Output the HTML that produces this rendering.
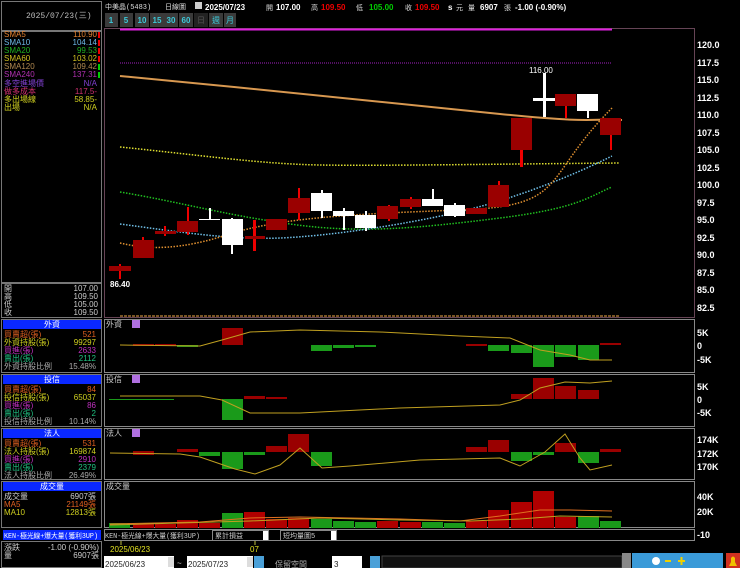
<!DOCTYPE html>
<html><head><meta charset="utf-8"><style>
html,body{margin:0;padding:0;background:#000;width:740px;height:568px;overflow:hidden}
svg{display:block}
text{font-family:"Liberation Sans","Noto Sans CJK TC",sans-serif;font-size:8px}
.m{font-family:"Liberation Mono","Noto Sans CJK TC",monospace;font-size:8px}
.s{font-size:7px}
.ax{font-family:"Liberation Sans",sans-serif;font-size:9px;fill:#fff;font-weight:bold}
</style></head><body>
<svg width="740" height="568" viewBox="0 0 740 568" xmlns="http://www.w3.org/2000/svg">
<rect width="740" height="568" fill="#000"/>
<g fill="none" stroke="#777" stroke-width="1">
<rect x="1.5" y="1.5" width="100" height="29"/>
<rect x="1.5" y="31.5" width="100" height="251"/>
<rect x="1.5" y="283.5" width="100" height="34"/>
<rect x="1.5" y="319.5" width="100" height="53"/>
<rect x="1.5" y="374.5" width="100" height="52"/>
<rect x="1.5" y="428.5" width="100" height="51"/>
<rect x="1.5" y="481.5" width="100" height="46"/>
<rect x="1.5" y="541.5" width="100" height="26"/>
</g>
<text x="26" y="18" class="m" fill="#bbb">2025/07/23(三)</text>
<g class="m s">
<text x="4" y="37" fill="#e08030">SMA5</text><text x="97" y="37" fill="#e08030" text-anchor="end">110.90</text>
<text x="4" y="45" fill="#6cb8e8">SMA10</text><text x="97" y="45" fill="#6cb8e8" text-anchor="end">104.14</text>
<text x="4" y="53" fill="#20b020">SMA20</text><text x="97" y="53" fill="#20b020" text-anchor="end">99.53</text>
<text x="4" y="61" fill="#d0c020">SMA60</text><text x="97" y="61" fill="#d0c020" text-anchor="end">103.02</text>
<text x="4" y="69" fill="#b08850">SMA120</text><text x="97" y="69" fill="#b08850" text-anchor="end">109.42</text>
<text x="4" y="77" fill="#b030b0">SMA240</text><text x="97" y="77" fill="#b030b0" text-anchor="end">137.31</text>
<text x="4" y="86" fill="#8040d0">多空進場價</text><text x="97" y="86" fill="#8040d0" text-anchor="end">N/A</text>
<text x="4" y="94" fill="#d03070">做多成本</text><text x="97" y="94" fill="#d03070" text-anchor="end">117.5-</text>
<text x="4" y="102" fill="#d0d020">多出場線</text><text x="97" y="102" fill="#d0d020" text-anchor="end">58.85-</text>
<text x="4" y="110" fill="#d0d020">出場</text><text x="97" y="110" fill="#d0d020" text-anchor="end">N/A</text>
</g>
<g fill="#e00"><rect x="98" y="32" width="2" height="6"/><rect x="98" y="40" width="2" height="6"/><rect x="98" y="48" width="2" height="6"/><rect x="98" y="56" width="2" height="6"/></g>
<g fill="#0c0"><rect x="98" y="64" width="2" height="6"/><rect x="98" y="72" width="2" height="6"/></g>
<g class="m s" fill="#ccc">
<text x="4" y="291">開</text><text x="98" y="291" text-anchor="end">107.00</text>
<text x="4" y="299">高</text><text x="98" y="299" text-anchor="end">109.50</text>
<text x="4" y="307">低</text><text x="98" y="307" text-anchor="end">105.00</text>
<text x="4" y="315">收</text><text x="98" y="315" text-anchor="end">109.50</text>
</g>
<g fill="#0a28ff"><rect x="3" y="320" width="98" height="9"/><rect x="3" y="375" width="98" height="9"/><rect x="3" y="429" width="98" height="9"/><rect x="3" y="482" width="98" height="9"/><rect x="3" y="530" width="98" height="10"/></g>
<g class="m s" fill="#fff" text-anchor="middle"><text x="52" y="327">外資</text><text x="52" y="382">投信</text><text x="52" y="436">法人</text><text x="52" y="489">成交量</text></g>
<text x="4" y="538" class="m s" fill="#fff" textLength="94" lengthAdjust="spacingAndGlyphs">KEN-極光線+爆大量(獲利3UP)</text>
<g class="m s">
<text x="4" y="337" fill="#e06020">買賣超(張)</text><text x="96" y="337" fill="#e06020" text-anchor="end">521</text>
<text x="4" y="345" fill="#d0d020">外資持股(張)</text><text x="96" y="345" fill="#d0d020" text-anchor="end">99297</text>
<text x="4" y="353" fill="#c030c0">買進(張)</text><text x="96" y="353" fill="#c030c0" text-anchor="end">2633</text>
<text x="4" y="361" fill="#20c080">賣出(張)</text><text x="96" y="361" fill="#20c080" text-anchor="end">2112</text>
<text x="4" y="369" fill="#aaa">外資持股比例</text><text x="96" y="369" fill="#aaa" text-anchor="end">15.48%</text>
<text x="4" y="392" fill="#e06020">買賣超(張)</text><text x="96" y="392" fill="#e06020" text-anchor="end">84</text>
<text x="4" y="400" fill="#d0d020">投信持股(張)</text><text x="96" y="400" fill="#d0d020" text-anchor="end">65037</text>
<text x="4" y="408" fill="#c030c0">買進(張)</text><text x="96" y="408" fill="#c030c0" text-anchor="end">86</text>
<text x="4" y="416" fill="#20c080">賣出(張)</text><text x="96" y="416" fill="#20c080" text-anchor="end">2</text>
<text x="4" y="424" fill="#aaa">投信持股比例</text><text x="96" y="424" fill="#aaa" text-anchor="end">10.14%</text>
<text x="4" y="446" fill="#e06020">買賣超(張)</text><text x="96" y="446" fill="#e06020" text-anchor="end">531</text>
<text x="4" y="454" fill="#d0d020">法人持股(張)</text><text x="96" y="454" fill="#d0d020" text-anchor="end">169874</text>
<text x="4" y="462" fill="#c030c0">買進(張)</text><text x="96" y="462" fill="#c030c0" text-anchor="end">2910</text>
<text x="4" y="470" fill="#20c080">賣出(張)</text><text x="96" y="470" fill="#20c080" text-anchor="end">2379</text>
<text x="4" y="478" fill="#aaa">法人持股比例</text><text x="96" y="478" fill="#aaa" text-anchor="end">26.49%</text>
<text x="4" y="499" fill="#ccc">成交量</text><text x="96" y="499" fill="#ccc" text-anchor="end">6907張</text>
<text x="4" y="507" fill="#e06020">MA5</text><text x="96" y="507" fill="#e06020" text-anchor="end">21149張</text>
<text x="4" y="515" fill="#d0d020">MA10</text><text x="96" y="515" fill="#d0d020" text-anchor="end">12813張</text>
<text x="4" y="550" fill="#ccc">漲跌</text><text x="99" y="550" fill="#ccc" text-anchor="end">-1.00 (-0.90%)</text>
<text x="4" y="558" fill="#ccc">量</text><text x="99" y="558" fill="#ccc" text-anchor="end">6907張</text>
</g>
<text x="105" y="9" class="m s" fill="#ddd">中美晶(5483)</text>
<text x="165" y="9" class="m s" fill="#ddd">日線圖</text>
<rect x="195" y="2" width="7" height="7" fill="#ccc"/>
<text x="205" y="10" font-size="9" fill="#fff" font-weight="bold">2025/07/23</text>
<text x="266" y="10" class="m s" fill="#ddd">開</text><text x="276" y="10" font-size="9" fill="#fff" font-weight="bold">107.00</text>
<text x="311" y="10" class="m s" fill="#ddd">高</text><text x="321" y="10" font-size="9" fill="#e00" font-weight="bold">109.50</text>
<text x="356" y="10" class="m s" fill="#ddd">低</text><text x="369" y="10" font-size="9" fill="#0c0" font-weight="bold">105.00</text>
<text x="405" y="10" class="m s" fill="#ddd">收</text><text x="415" y="10" font-size="9" fill="#e00" font-weight="bold">109.50</text>
<text x="448" y="10" font-size="9" fill="#fff" font-weight="bold">s</text><text x="456" y="10" class="m s" fill="#ddd">元</text>
<text x="468" y="10" class="m s" fill="#ddd">量</text><text x="480" y="10" font-size="9" fill="#fff" font-weight="bold">6907</text>
<text x="504" y="10" class="m s" fill="#ddd">張</text><text x="515" y="10" font-size="9" fill="#fff" font-weight="bold">-1.00 (-0.90%)</text>
<g fill="#3a3a3a"><rect x="105" y="13" width="13" height="14"/><rect x="120" y="13" width="13" height="14"/><rect x="135" y="13" width="14" height="14"/><rect x="150" y="13" width="14" height="14"/><rect x="164" y="13" width="14" height="14"/><rect x="179" y="13" width="14" height="14"/><rect x="194" y="13" width="14" height="14" fill="#222"/><rect x="209" y="13" width="14" height="14"/><rect x="224" y="13" width="12" height="14"/></g>
<g fill="#3cc8d8" text-anchor="middle"><text x="111" y="23" font-size="9" font-weight="bold">1</text><text x="126" y="23" font-size="9" font-weight="bold">5</text><text x="142" y="23" font-size="9" font-weight="bold">10</text><text x="157" y="23" font-size="9" font-weight="bold">15</text><text x="171" y="23" font-size="9" font-weight="bold">30</text><text x="186" y="23" font-size="9" font-weight="bold">60</text></g>
<g class="m s" text-anchor="middle"><text x="201" y="23" fill="#555">日</text><text x="216" y="23" fill="#3cc8d8">週</text><text x="230" y="23" fill="#3cc8d8">月</text></g>
<rect x="104.5" y="28.5" width="590" height="289" fill="none" stroke="#664455"/>
<line x1="120" y1="29.5" x2="612" y2="29.5" stroke="#e020e0" stroke-width="2"/>
<line x1="120" y1="63" x2="612" y2="63" stroke="#a020c0" stroke-dasharray="1,1"/>
<g><text x="697" y="48" class="ax">120.0</text><text x="697" y="66" class="ax">117.5</text><text x="697" y="83" class="ax">115.0</text><text x="697" y="101" class="ax">112.5</text><text x="697" y="118" class="ax">110.0</text><text x="697" y="136" class="ax">107.5</text><text x="697" y="153" class="ax">105.0</text><text x="697" y="171" class="ax">102.5</text><text x="697" y="188" class="ax">100.0</text><text x="697" y="206" class="ax">97.5</text><text x="697" y="223" class="ax">95.0</text><text x="697" y="241" class="ax">92.5</text><text x="697" y="258" class="ax">90.0</text><text x="697" y="276" class="ax">87.5</text><text x="697" y="293" class="ax">85.0</text><text x="697" y="311" class="ax">82.5</text></g>
<path d="M120 76 C250 88 400 104 500 114 S590 118 622 120" stroke="#d89850" stroke-width="2" fill="none"/>
<path d="M120 147 C200 155 260 164 320 165 S500 164 620 163" stroke="#e0e030" stroke-width="1.5" stroke-dasharray="1.5,1.5" fill="none"/>
<path d="M120 192 C180 202 220 214 290 224 S420 228 500 218 S590 196 612 187" stroke="#20c020" stroke-width="1.5" stroke-dasharray="1.5,1.5" fill="none"/>
<path d="M120 224 C180 232 230 240 280 238 S400 225 450 214 S560 182 612 156" stroke="#70c0e8" stroke-width="1.5" stroke-dasharray="1.5,1.5" fill="none"/>
<path d="M120 243 C150 250 180 250 230 234 S350 214 460 210 S540 180 612 108" stroke="#e09030" stroke-width="1.5" stroke-dasharray="1.5,1.5" fill="none"/>
<g fill="#e00">
<rect x="119" y="264" width="2" height="15"/><rect x="142" y="237" width="2" height="6"/><rect x="164" y="226" width="2" height="10"/><rect x="187" y="207" width="2" height="28"/><rect x="253" y="220" width="3" height="31"/><rect x="298" y="188" width="2" height="32"/><rect x="388" y="205" width="2" height="16"/><rect x="410" y="197" width="2" height="12"/><rect x="498" y="181" width="2" height="6"/><rect x="520" y="145" width="3" height="22"/><rect x="565" y="104" width="2" height="14"/><rect x="610" y="133" width="2" height="17"/>
</g>
<g fill="#fff"><rect x="231" y="218" width="2" height="36"/><rect x="209" y="208" width="2" height="11"/><rect x="321" y="190" width="2" height="28"/><rect x="343" y="208" width="2" height="22"/><rect x="365" y="211" width="2" height="20"/><rect x="432" y="189" width="2" height="12"/><rect x="454" y="203" width="2" height="14"/><rect x="543" y="73" width="3" height="44"/><rect x="587" y="104" width="2" height="14"/></g>
<g fill="#9a0000">
<rect x="109" y="266" width="22" height="5"/><rect x="133" y="240" width="21" height="18"/><rect x="155" y="231" width="21" height="3"/><rect x="177" y="221" width="21" height="11"/><rect x="245" y="236" width="20" height="3"/><rect x="266" y="219" width="21" height="11"/><rect x="288" y="198" width="22" height="15"/><rect x="377" y="206" width="21" height="13"/><rect x="400" y="199" width="21" height="8"/><rect x="466" y="208" width="21" height="6"/><rect x="488" y="185" width="21" height="22"/><rect x="511" y="118" width="21" height="32"/><rect x="555" y="94" width="21" height="12"/><rect x="600" y="118" width="21" height="17"/>
</g>
<g fill="#fff"><rect x="222" y="219" width="21" height="26"/><rect x="199" y="219" width="21" height="1"/><rect x="311" y="193" width="21" height="18"/><rect x="333" y="211" width="21" height="5"/><rect x="355" y="215" width="21" height="13"/><rect x="422" y="199" width="21" height="7"/><rect x="444" y="205" width="21" height="11"/><rect x="533" y="98" width="22" height="3"/><rect x="577" y="94" width="21" height="17"/></g>
<text x="110" y="287" font-size="9" fill="#fff" font-weight="bold">86.40</text>
<text x="529" y="73" font-size="9" fill="#fff">116.00</text>
<line x1="120" y1="316" x2="620" y2="316" stroke="#a07030" stroke-width="1.5" stroke-dasharray="3,1"/>
<g fill="none" stroke="#888"><rect x="104.5" y="319.5" width="590" height="53"/><rect x="104.5" y="374.5" width="590" height="52"/><rect x="104.5" y="428.5" width="590" height="51"/><rect x="104.5" y="481.5" width="590" height="46"/><rect x="104.5" y="529.5" width="590" height="11"/></g>
<g class="m s" fill="#ccc"><text x="106" y="327">外資</text><text x="106" y="382">投信</text><text x="106" y="436">法人</text><text x="106" y="489">成交量</text></g>
<g fill="#b070e0"><rect x="132" y="320" width="8" height="8"/><rect x="132" y="375" width="8" height="8"/><rect x="132" y="429" width="8" height="8"/></g>
<g><text x="697" y="336" class="ax">5K</text><text x="697" y="349" class="ax">0</text><text x="697" y="363" class="ax">-5K</text><text x="697" y="390" class="ax">5K</text><text x="697" y="403" class="ax">0</text><text x="697" y="416" class="ax">-5K</text><text x="697" y="443" class="ax">174K</text><text x="697" y="457" class="ax">172K</text><text x="697" y="470" class="ax">170K</text><text x="697" y="500" class="ax">40K</text><text x="697" y="515" class="ax">20K</text><text x="697" y="538" class="ax">-10</text></g>
<g fill="#9a0000"><rect x="133" y="344" width="21" height="2"/><rect x="155" y="344" width="21" height="2"/><rect x="222" y="328" width="21" height="17"/><rect x="600" y="343" width="21" height="2"/><rect x="466" y="344" width="21" height="2"/></g>
<g fill="#1a9a1a"><rect x="177" y="345" width="21" height="2"/><rect x="311" y="345" width="21" height="6"/><rect x="333" y="345" width="21" height="3"/><rect x="355" y="345" width="21" height="2"/><rect x="488" y="345" width="21" height="6"/><rect x="511" y="345" width="21" height="8"/><rect x="533" y="345" width="21" height="22"/><rect x="555" y="345" width="21" height="12"/><rect x="578" y="345" width="21" height="15"/></g>
<path d="M120 345 L200 346 L222 340 L250 332 L300 330 L380 332 L460 336 L510 338 L540 350 L570 355 L590 360 L612 360" stroke="#c0a020" fill="none"/>
<g fill="#9a0000"><rect x="244" y="396" width="21" height="3"/><rect x="266" y="397" width="21" height="2"/><rect x="511" y="394" width="21" height="5"/><rect x="533" y="378" width="21" height="21"/><rect x="555" y="386" width="21" height="13"/><rect x="578" y="390" width="21" height="9"/></g>
<g fill="#1a9a1a"><rect x="222" y="399" width="21" height="21"/><rect x="109" y="399" width="65" height="1"/></g>
<path d="M120 396 L200 396 L222 400 L250 413 L300 413 L400 408 L500 405 L520 400 L540 388 L565 382 L590 383 L612 381" stroke="#c0a020" fill="none"/>
<g fill="#9a0000"><rect x="133" y="451" width="21" height="4"/><rect x="177" y="449" width="21" height="3"/><rect x="266" y="446" width="21" height="6"/><rect x="288" y="434" width="21" height="18"/><rect x="466" y="447" width="21" height="5"/><rect x="488" y="440" width="21" height="12"/><rect x="555" y="443" width="21" height="9"/><rect x="600" y="449" width="21" height="3"/></g>
<g fill="#1a9a1a"><rect x="199" y="452" width="21" height="4"/><rect x="222" y="452" width="21" height="17"/><rect x="244" y="452" width="21" height="3"/><rect x="311" y="452" width="21" height="14"/><rect x="511" y="452" width="21" height="9"/><rect x="533" y="452" width="21" height="3"/><rect x="578" y="452" width="21" height="11"/></g>
<path d="M110 453 L180 454 L200 457 L235 469 L255 474 L280 465 L300 448 L322 468 L350 466 L420 460 L500 458 L520 466 L545 452 L565 434 L580 458 L590 470 L612 465" stroke="#c0a020" fill="none"/>
<g fill="#1a9a1a"><rect x="109" y="523" width="21" height="5"/><rect x="222" y="513" width="21" height="15"/><rect x="311" y="519" width="21" height="9"/><rect x="333" y="521" width="21" height="7"/><rect x="355" y="522" width="21" height="6"/><rect x="422" y="522" width="21" height="6"/><rect x="444" y="523" width="21" height="5"/><rect x="578" y="516" width="21" height="12"/><rect x="600" y="521" width="21" height="7"/></g>
<g fill="#b00000"><rect x="133" y="524" width="21" height="4"/><rect x="155" y="524" width="21" height="4"/><rect x="177" y="520" width="21" height="8"/><rect x="199" y="523" width="21" height="5"/><rect x="244" y="512" width="21" height="16"/><rect x="266" y="519" width="21" height="9"/><rect x="288" y="518" width="21" height="10"/><rect x="377" y="521" width="21" height="7"/><rect x="400" y="522" width="21" height="6"/><rect x="466" y="521" width="21" height="7"/><rect x="488" y="510" width="21" height="18"/><rect x="511" y="502" width="21" height="26"/><rect x="533" y="491" width="21" height="37"/><rect x="555" y="517" width="21" height="11"/></g>
<path d="M110 524 L200 522 L250 518 L300 517 L400 519 L460 521 L500 516 L540 510 L570 510 L612 511" stroke="#e07020" fill="none"/>
<path d="M110 525 L250 521 L320 518 L400 520 L470 521 L520 519 L560 516 L612 517" stroke="#c0a020" fill="none"/>
<text x="105" y="538" class="m s" fill="#ccc" textLength="95" lengthAdjust="spacingAndGlyphs">KEN-極光線+爆大量(獲利3UP)</text>
<rect x="212.5" y="530.5" width="56" height="10" fill="none" stroke="#888"/><text x="215" y="538" class="m s" fill="#ccc">累計損益</text><rect x="263" y="531" width="5" height="9" fill="#fff"/>
<rect x="280.5" y="530.5" width="56" height="10" fill="none" stroke="#888"/><text x="283" y="538" class="m s" fill="#ccc">短均量圖5</text><rect x="331" y="531" width="5" height="9" fill="#fff"/>
<line x1="121" y1="541" x2="121" y2="545" stroke="#c0c040"/><line x1="255" y1="541" x2="255" y2="545" stroke="#c0c040"/>
<text x="110" y="552" font-size="9" fill="#e0e020">2025/06/23</text><text x="250" y="552" font-size="9" fill="#e0e020">07</text>
<rect x="104" y="556" width="70" height="12" fill="#fff"/><text x="105" y="567" font-size="12" fill="#222">2025/06/23</text><rect x="168" y="557" width="6" height="10" fill="#ddd"/>
<text x="177" y="566" font-size="10" fill="#ccc">~</text>
<rect x="187" y="556" width="66" height="12" fill="#fff"/><text x="188" y="567" font-size="12" fill="#222">2025/07/23</text><rect x="247" y="557" width="6" height="10" fill="#ddd"/>
<rect x="254" y="556" width="10" height="12" fill="#4aa0d8"/>
<text x="275" y="567" font-size="14" fill="#aaa" font-family="Noto Sans CJK TC">保留空間</text>
<rect x="332" y="556" width="30" height="12" fill="#fff"/><text x="334" y="567" font-size="11" fill="#222">3</text>
<rect x="370" y="556" width="10" height="12" fill="#4aa0d8"/>
<rect x="382" y="556" width="240" height="12" fill="#111" stroke="#444"/>
<rect x="622" y="553" width="9" height="15" fill="#888"/>
<g fill="#3a9ad8"><rect x="632" y="553" width="13" height="15"/><rect x="645" y="553" width="13" height="15"/><rect x="658" y="553" width="13" height="15"/><rect x="671" y="553" width="13" height="15"/><rect x="684" y="553" width="13" height="15"/><rect x="697" y="553" width="13" height="15"/><rect x="710" y="553" width="13" height="15"/></g>
<rect x="726" y="553" width="14" height="15" fill="#d03020"/>
<circle cx="656" cy="561" r="4" fill="#fff"/><rect x="665" y="560" width="6" height="2" fill="#f0d000"/><rect x="678" y="560" width="7" height="2" fill="#f0d000"/><rect x="680.5" y="557" width="2" height="8" fill="#f0d000"/>
<path d="M729 566 L737 566 L735 562 L735 558 Q733 555 731 558 L731 562 Z" fill="#f0c000"/>
</svg>
</body></html>
